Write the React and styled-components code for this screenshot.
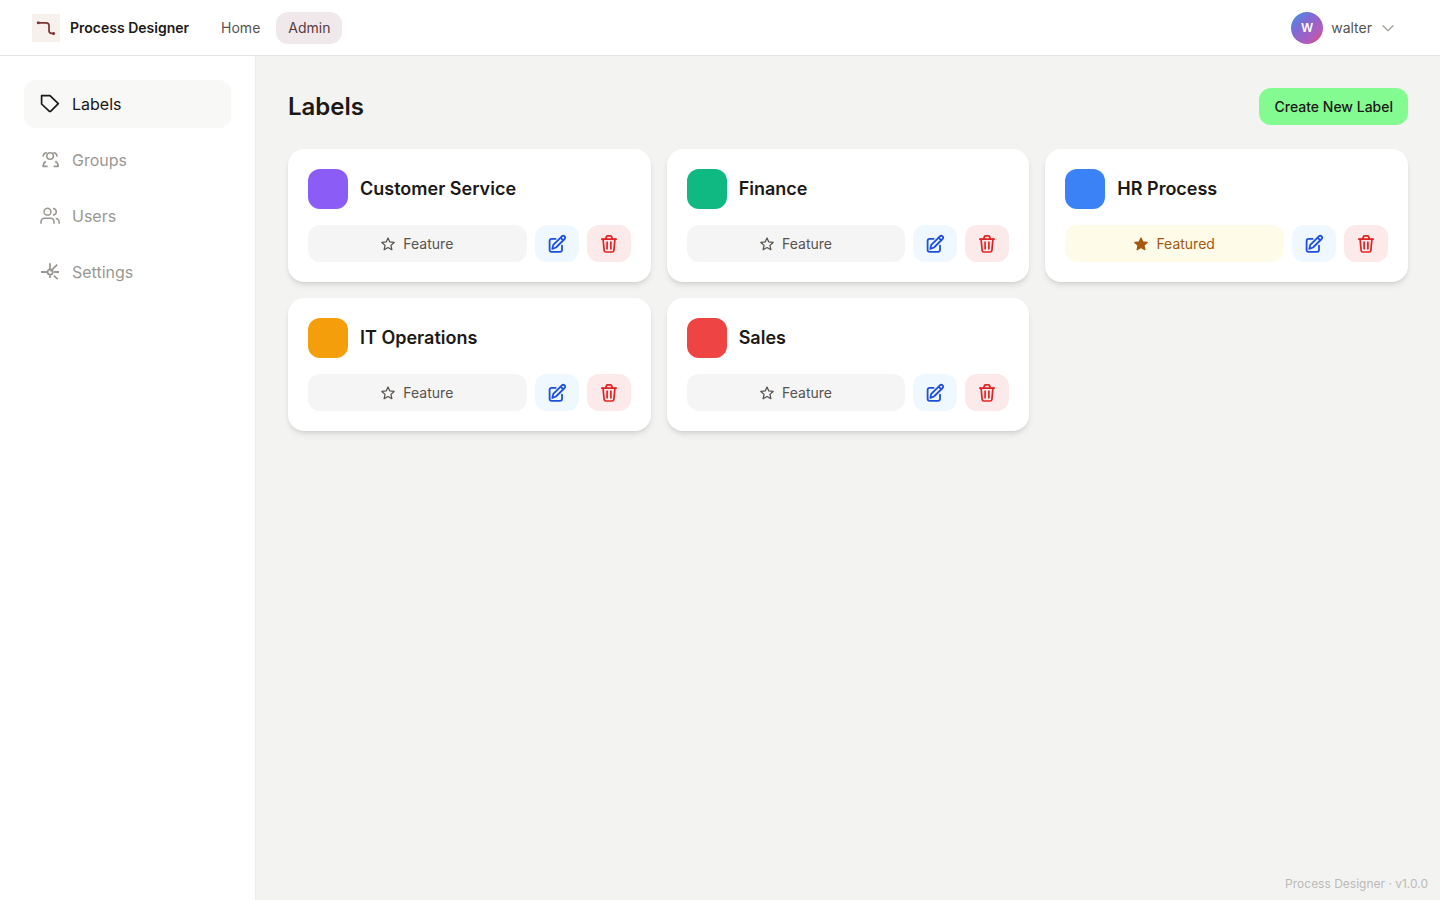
import React from "react";
import styled, { createGlobalStyle } from "styled-components";

const GlobalStyle = createGlobalStyle`
  *, *::before, *::after { box-sizing: border-box; }
  body {
    margin: 0;
    background: #f3f3f1;
    color: #1c1917;
    font-family: Inter, "Liberation Sans", sans-serif;
  }
  button { font-family: inherit; border: 0; cursor: pointer; }
  a { color: inherit; text-decoration: none; }
`;

const Page = styled.div`
  min-height: 100vh;
  display: flex;
  flex-direction: column;
`;

const Header = styled.header`
  display: flex;
  align-items: center;
  height: 56px;
  padding: 0 32px;
  background: #fff;
  border-bottom: 1px solid #e5e5e4;
`;

const Brand = styled.a`
  display: flex;
  align-items: center;
  gap: 10px;
  margin-right: 20px;
  font-size: 14px;
  line-height: 20px;
  font-weight: 600;
`;

const TopNav = styled.nav`
  display: flex;
  gap: 4px;
`;

const TopLink = styled.a`
  padding: 6px 12px;
  border-radius: 12px;
  font-size: 14px;
  line-height: 20px;
  color: ${(p) => (p.$active ? "#5b3a3c" : "#57534e")};
  background: ${(p) => (p.$active ? "#f0e9eb" : "transparent")};
`;

const UserButton = styled.button`
  display: flex;
  align-items: center;
  gap: 8px;
  margin-left: auto;
  padding: 0 12px 0 0;
  background: none;
  font-size: 14px;
  line-height: 20px;
  color: #57534e;
`;

const Avatar = styled.span`
  display: grid;
  place-items: center;
  width: 32px;
  height: 32px;
  border-radius: 50%;
  background: linear-gradient(135deg, #3b9be8 0%, #7d6bd6 35%, #b45bb9 75%, #ef4a4a 100%);
  color: #fff;
  font-size: 12px;
  font-weight: 600;
`;

const Body = styled.div`
  display: flex;
  flex: 1;
`;

const Sidebar = styled.nav`
  display: flex;
  flex-direction: column;
  gap: 8px;
  flex: 0 0 256px;
  padding: 24px;
  background: #fff;
  border-right: 1px solid #ececea;
`;

const SideLink = styled.a`
  display: flex;
  align-items: center;
  gap: 12px;
  height: 48px;
  padding: 0 16px;
  border-radius: 12px;
  font-size: 16px;
  line-height: 24px;
  color: ${(p) => (p.$active ? "#1c1917" : "#9b9893")};
  background: ${(p) => (p.$active ? "#f8f8f7" : "transparent")};
`;

const Main = styled.main`
  display: flex;
  flex-direction: column;
  flex: 1;
  min-width: 0;
`;

const Content = styled.section`
  padding: 32px;
`;

const TitleRow = styled.div`
  display: flex;
  align-items: center;
  justify-content: space-between;
  margin-bottom: 24px;
`;

const Title = styled.h1`
  margin: 0;
  font-size: 24px;
  line-height: 32px;
  font-weight: 600;
`;

const CreateButton = styled.button`
  height: 37px;
  padding: 0 15px;
  border-radius: 12px;
  background: #84fb90;
  color: #1c1917;
  font-size: 14px;
  line-height: 20px;
  font-weight: 500;
`;

const Grid = styled.div`
  display: grid;
  grid-template-columns: repeat(3, 1fr);
  gap: 16px;
`;

const Card = styled.article`
  padding: 20px;
  border-radius: 16px;
  background: #fff;
  box-shadow: 0 4px 6px -1px rgba(0, 0, 0, 0.1), 0 2px 4px -2px rgba(0, 0, 0, 0.1);
`;

const CardHead = styled.div`
  display: flex;
  align-items: center;
  gap: 12px;
  margin-bottom: 16px;
`;

const Swatch = styled.span`
  width: 40px;
  height: 40px;
  border-radius: 12px;
  background: ${(p) => p.$color};
`;

const CardTitle = styled.h2`
  margin: 0;
  font-size: 18px;
  line-height: 28px;
  font-weight: 600;
`;

const Actions = styled.div`
  display: flex;
  gap: 8px;
`;

const FeatureButton = styled.button`
  display: flex;
  flex: 1;
  align-items: center;
  justify-content: center;
  gap: 8px;
  height: 37px;
  padding: 0;
  border-radius: 12px;
  font-size: 14px;
  line-height: 20px;
  background: ${(p) => (p.$on ? "#fefce8" : "#f5f5f5")};
  color: ${(p) => (p.$on ? "#a5560f" : "#57534e")};
`;

const IconButton = styled.button`
  display: grid;
  place-items: center;
  width: 44px;
  height: 37px;
  padding: 0;
  border-radius: 12px;
  background: ${(p) => (p.$danger ? "#fce9e9" : "#eff8ff")};
  color: ${(p) => (p.$danger ? "#e02424" : "#1d4fe0")};
`;

const Footer = styled.footer`
  margin-top: auto;
  padding: 8px 12px;
  text-align: right;
  font-size: 12px;
  line-height: 16px;
  color: #bcbab8;
`;

const Icon = ({ size = 20, stroke = 1.5, children }) => (
  <svg
    width={size}
    height={size}
    viewBox="0 0 20 20"
    fill="none"
    stroke="currentColor"
    strokeWidth={stroke}
    strokeLinecap="round"
    strokeLinejoin="round"
    aria-hidden="true"
  >
    {children}
  </svg>
);

const Logo = () => (
  <svg width="28" height="28" viewBox="0 0 28 28" fill="none" aria-hidden="true">
    <rect width="28" height="28" fill="#f6f1ec" />
    <path d="M6.5 8.8H14.2Q17 8.8 17 11.6V16.5Q17 19.4 19.8 19.4H21.5" stroke="#7c3434" strokeWidth="1.7" />
    <circle cx="6.3" cy="8.8" r="1.5" fill="#7c3434" />
    <circle cx="21.6" cy="19.4" r="1.5" fill="#7c3434" />
  </svg>
);

const TagIcon = () => (
  <Icon stroke={1.7}>
    <path d="M1.6 1.6H10L18.3 9.7L10.6 17.3H9.4L1.6 10Z" />
  </Icon>
);

const GroupsIcon = () => (
  <Icon stroke={1.6}>
    <circle cx="10.1" cy="6" r="3.3" />
    <path d="M3.2 6Q3.8 3 6.3 2.8M17 6Q16.4 3 13.9 2.8" />
    <path strokeLinecap="butt" d="M5.9 11.6Q3.1 12.8 3.1 16.4H7.6M15.2 11.6Q18.2 12.8 18.2 16.4H13.6" />
  </Icon>
);

const UsersIcon = () => (
  <Icon>
    <circle cx="7.5" cy="5.7" r="3.4" />
    <path d="M1 17.2V16Q1 12.2 4.6 12.2H10.4Q14 12.2 14 16V17.2" />
    <path d="M13.6 2.5Q16.3 3.2 16.3 5.8T13.6 9M16.4 12.5Q19.2 13.3 19.2 17.2" />
  </Icon>
);

const SettingsIcon = () => (
  <Icon stroke={1.8}>
    <circle cx="10.2" cy="10" r="2.6" />
    <path strokeLinecap="butt" d="M1 10H7M14 10H19M10 1.2V7M10 13V16M17.2 2.6L10.4 9.4M13.8 13.6L17.8 17.2" />
  </Icon>
);

const EditIcon = () => (
  <Icon stroke={1.8}>
    <path d="M8.6 4.9H4.7Q2.6 4.9 2.6 7V15.7Q2.6 17.8 4.7 17.8H13Q15 17.8 15 15.7V11.6" />
    <path d="M5.3 14.9L6.3 10.8L14.9 2.3Q16.3 1.1 17.6 2.3Q18.8 3.6 17.6 5L9 13.5Z" />
    <path d="M13.7 3.8L16.1 6.2" />
  </Icon>
);

const TrashIcon = () => (
  <Icon stroke={1.7}>
    <path d="M2.8 5.1H17.2M6.6 5L7.5 2.6Q7.8 1.9 8.6 1.9H11.4Q12.2 1.9 12.5 2.6L13.4 5" />
    <path d="M4.1 5.2L5.1 16.3Q5.3 18 6.8 18H13.2Q14.7 18 14.9 16.3L15.9 5.2M8.1 8.2V14.8M11.9 8.2V14.8" />
  </Icon>
);

const StarIcon = ({ filled }) => (
  <Icon size={14} stroke={1.8}>
    <path
      fill={filled ? "currentColor" : "none"}
      d="M10 1.4L12.6 7.1L18.8 7.8L14.2 12L15.5 18.2L10 15.1L4.5 18.2L5.8 12L1.2 7.8L7.4 7.1Z"
    />
  </Icon>
);

const ChevronIcon = () => (
  <svg width="16" height="16" viewBox="0 0 16 16" fill="none" stroke="#a09c98" strokeWidth="1.3" strokeLinecap="round" aria-hidden="true">
    <path d="M3 5.8L8 10.6L13 5.8" />
  </svg>
);

const sections = [
  { name: "Labels", Glyph: TagIcon, active: true },
  { name: "Groups", Glyph: GroupsIcon },
  { name: "Users", Glyph: UsersIcon },
  { name: "Settings", Glyph: SettingsIcon },
];

const labels = [
  { name: "Customer Service", color: "#8b5cf6" },
  { name: "Finance", color: "#10b981" },
  { name: "HR Process", color: "#3b82f6", featured: true },
  { name: "IT Operations", color: "#f59e0b" },
  { name: "Sales", color: "#ef4444" },
];

const LabelCard = ({ name, color, featured }) => (
  <Card>
    <CardHead>
      <Swatch $color={color} />
      <CardTitle>{name}</CardTitle>
    </CardHead>
    <Actions>
      <FeatureButton type="button" $on={featured} aria-pressed={!!featured}>
        <StarIcon filled={featured} />
        {featured ? "Featured" : "Feature"}
      </FeatureButton>
      <IconButton type="button" aria-label={`Edit ${name}`}>
        <EditIcon />
      </IconButton>
      <IconButton type="button" $danger aria-label={`Delete ${name}`}>
        <TrashIcon />
      </IconButton>
    </Actions>
  </Card>
);

export default function App() {
  return (
    <Page>
      <GlobalStyle />
      <Header>
        <Brand href="#home">
          <Logo />
          Process Designer
        </Brand>
        <TopNav>
          <TopLink href="#home">Home</TopLink>
          <TopLink href="#admin" $active aria-current="page">Admin</TopLink>
        </TopNav>
        <UserButton type="button">
          <Avatar>W</Avatar>
          walter
          <ChevronIcon />
        </UserButton>
      </Header>
      <Body>
        <Sidebar>
          {sections.map(({ name, Glyph, active }) => (
            <SideLink key={name} href={`#${name.toLowerCase()}`} $active={active}>
              <Glyph />
              {name}
            </SideLink>
          ))}
        </Sidebar>
        <Main>
          <Content>
            <TitleRow>
              <Title>Labels</Title>
              <CreateButton type="button">Create New Label</CreateButton>
            </TitleRow>
            <Grid>
              {labels.map((label) => (
                <LabelCard key={label.name} {...label} />
              ))}
            </Grid>
          </Content>
          <Footer>Process Designer · v1.0.0</Footer>
        </Main>
      </Body>
    </Page>
  );
}
